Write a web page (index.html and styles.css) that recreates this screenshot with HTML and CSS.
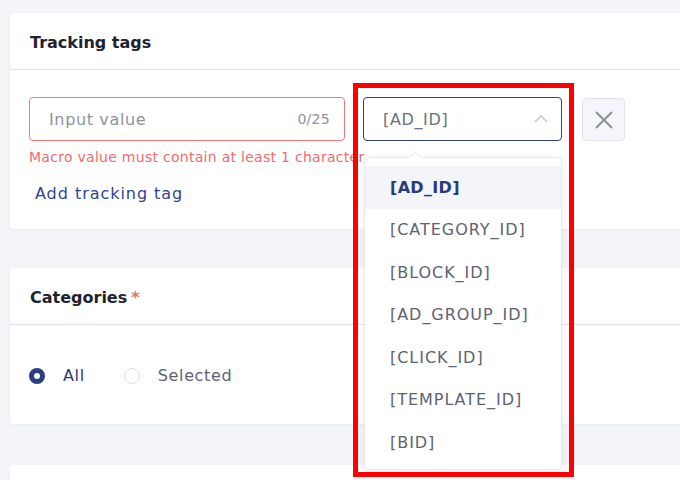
FILE: index.html
```html
<!DOCTYPE html>
<html lang="en">
<head>
    <meta charset="UTF-8">
    <meta name="viewport" content="width=device-width, initial-scale=1.0">
    <title>Tracking tags</title>
    <link rel="stylesheet" href="styles.css">
</head>
<body>
    <div class="page">
        <!-- Tracking tags -->
        <section class="card card-tags">
            <h2 class="card-title">Tracking tags</h2>
            <div class="card-body">
                <div class="tag-row">
                    <div class="field field-error">
                        <span class="placeholder">Input value</span>
                        <span class="counter">0/25</span>
                    </div>
                    <div class="select-wrap">
                        <div class="select open">
                            <span class="select-value">[AD_ID]</span>
                            <svg class="chevron" width="14" height="8" viewBox="0 0 14 8" fill="none">
                                <path d="M1 7L7 1L13 7" stroke="#c3c7d0" stroke-width="1.5"/>
                            </svg>
                        </div>
                        <ul class="dropdown">
                            <li class="option active">[AD_ID]</li>
                            <li class="option">[CATEGORY_ID]</li>
                            <li class="option">[BLOCK_ID]</li>
                            <li class="option">[AD_GROUP_ID]</li>
                            <li class="option">[CLICK_ID]</li>
                            <li class="option">[TEMPLATE_ID]</li>
                            <li class="option">[BID]</li>
                        </ul>
                        <div class="highlight"></div>
                    </div>
                    <button class="remove" type="button">
                        <svg width="20" height="20" viewBox="0 0 20 20" fill="none">
                            <path d="M2 2L18 18M18 2L2 18" stroke="#8a90a0" stroke-width="2"/>
                        </svg>
                    </button>
                </div>
                <p class="error-text">Macro value must contain at least 1 character</p>
                <a class="add-link" href="#">Add tracking tag</a>
            </div>
        </section>

        <!-- Categories -->
        <section class="card card-categories">
            <h2 class="card-title">Categories <span class="required">*</span></h2>
            <div class="card-body radios">
                <label class="radio checked"><span class="dot"></span>All</label>
                <label class="radio"><span class="dot"></span>Selected</label>
            </div>
        </section>

        <section class="card card-next"></section>
    </div>
</body>
</html>
```

FILE: styles.css
```css
html, body {
    margin: 0;
    height: 100%;
    overflow: hidden;
}

body {
    font-family: "DejaVu Sans", "Open Sans", sans-serif;
    background-color: #f4f5f8;
    color: #1f2330;
    letter-spacing: 0.04em;
}

.page {
    padding: 13px 0 0 10px;
    width: 700px;
}

.card {
    background: white;
    border-radius: 4px;
    box-shadow: 0 1px 3px rgba(30, 40, 80, 0.05);
}

.card-title {
    margin: 0;
    height: 57px;
    box-sizing: border-box;
    padding: 3px 20px 0;
    display: flex;
    align-items: center;
    font-size: 16px;
    font-weight: 600;
    letter-spacing: 0;
    color: #1f2330;
    border-bottom: 1px solid #dfe1ea;
}

.required {
    color: #f06b6b;
    margin-left: 4px;
}

/* Tracking tags */
.card-tags {
    height: 216px;
}

.card-tags .card-body {
    padding: 27px 19px 0;
}

.tag-row {
    display: flex;
    align-items: flex-start;
}

.field {
    width: 316px;
    height: 44px;
    box-sizing: border-box;
    border: 1px solid #ccd;
    border-radius: 4px;
    padding: 0 14px 0 19px;
    display: flex;
    align-items: center;
    justify-content: space-between;
}

.field-error {
    border-color: #f07878;
}

.placeholder {
    font-size: 16px;
    color: #8d92a0;
}

.counter {
    font-size: 14px;
    letter-spacing: 0.02em;
    color: #8d92a0;
}

.select-wrap {
    position: relative;
    margin-left: 18px;
    width: 199px;
}

.select {
    height: 44px;
    box-sizing: border-box;
    border: 1px solid #2c3f80;
    border-radius: 4px;
    padding: 0 13px 0 19px;
    display: flex;
    align-items: center;
    justify-content: space-between;
}

.select-value {
    font-size: 16px;
    color: #6b7080;
}

.dropdown {
    position: absolute;
    top: 60px;
    left: 1px;
    width: 198px;
    box-sizing: border-box;
    margin: 0;
    padding: 8px 0 5px;
    list-style: none;
    background: white;
    border: 1px solid #e7e9f0;
    border-radius: 4px;
    box-shadow: 0 2px 8px rgba(30, 40, 80, 0.08);
    z-index: 2;
}

.dropdown::before {
    content: "";
    position: absolute;
    top: -5px;
    left: 46px;
    width: 8px;
    height: 8px;
    background: white;
    border-left: 1px solid #e7e9f0;
    border-top: 1px solid #e7e9f0;
    transform: rotate(45deg);
}

.option {
    height: 42.5px;
    display: flex;
    align-items: center;
    padding-left: 25px;
    font-size: 16px;
    letter-spacing: 0.06em;
    color: #5e6272;
}

.option.active {
    background: #f3f5f9;
    color: #2b3a7a;
    font-weight: 700;
    letter-spacing: 0.02em;
}

.highlight {
    position: absolute;
    top: -14px;
    left: -10px;
    width: 221px;
    height: 394px;
    box-sizing: border-box;
    border: 5px solid #ff0000;
    z-index: 3;
    pointer-events: none;
}

.remove {
    margin-left: 20px;
    margin-top: 1px;
    width: 43px;
    height: 43px;
    padding: 0;
    border: 1px solid #dfe2ec;
    border-radius: 4px;
    background: #f5f6fa;
    display: flex;
    align-items: center;
    justify-content: center;
}

.error-text {
    margin: 8px 0 0;
    font-size: 14px;
    line-height: 17px;
    letter-spacing: 0.02em;
    color: #f26b6b;
}

.add-link {
    display: inline-block;
    margin: 18px 0 0 6px;
    font-size: 16px;
    letter-spacing: 0.06em;
    color: #2d4393;
    text-decoration: none;
}

/* Categories */
.card-categories {
    margin-top: 39px;
    height: 156px;
}

.radios {
    display: flex;
    align-items: center;
    padding: 41px 19px;
}

.radio {
    display: flex;
    align-items: center;
    font-size: 16px;
    color: #5e6272;
    margin-right: 39px;
}

.radio.checked {
    color: #2b3a7a;
}

.dot {
    width: 16px;
    height: 16px;
    box-sizing: border-box;
    border: 1px solid #d9dce6;
    border-radius: 50%;
    margin-right: 18px;
}

.radio.checked .dot {
    border: 5.5px solid #2b3f80;
    background: white;
}

.card-next {
    margin-top: 41px;
    height: 40px;
}
```
